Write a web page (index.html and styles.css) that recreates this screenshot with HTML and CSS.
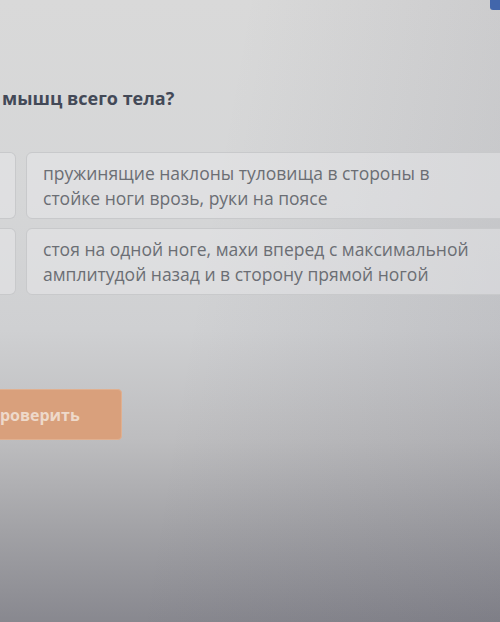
FILE: index.html
```html
<!DOCTYPE html>
<html lang="ru">
<head>
<meta charset="utf-8">
<link rel="stylesheet" href="styles.css">
</head>
<body>
<div class="page">
  <div class="topbar"><div class="corner"></div></div>
  <h1 class="question">мышц всего тела?</h1>
  <div class="options">
    <div class="opt opt-left"></div>
    <div class="opt"><p>пружинящие наклоны туловища в стороны в стойке ноги врозь, руки на поясе</p></div>
    <div class="opt opt-left"></div>
    <div class="opt"><p>стоя на одной ноге, махи вперед с максимальной амплитудой назад и в сторону прямой ногой</p></div>
  </div>
  <div class="actions"><button class="check">Проверить</button></div>
</div>
</body>
</html>
```

FILE: styles.css
```css
html, body {
  margin: 0;
  padding: 0;
  width: 500px;
  height: 622px;
  overflow: hidden;
}
body {
  background:
    linear-gradient(100deg, rgba(255,255,255,0) 40%, rgba(40,40,60,0.10) 100%),
    linear-gradient(180deg, #d9d9d9 0px, #d5d6d7 200px, #cfd0d2 330px, #bdbdbf 440px, #a2a2a6 530px, #88888f 622px);
  font-family: "Open Sans", "Noto Sans", sans-serif;
}
.page {
  width: 508px;
}
.topbar {
  height: 10px;
  display: flex;
  justify-content: flex-start;
  padding-left: 490px;
}
.corner {
  width: 14px;
  height: 10px;
  background: #4266ab;
  border-bottom-left-radius: 3px;
}
.question {
  margin: 76px 0 0 2px;
  font-size: 18px;
  font-weight: 700;
  line-height: 24px;
  color: #434957;
}
.options {
  margin-top: 42px;
  display: grid;
  grid-template-columns: 16px 1fr;
  column-gap: 10px;
  row-gap: 9px;
}
.opt {
  background: rgba(236,236,237,0.45);
  border: 1px solid #c8c9cb;
  border-radius: 6px;
  padding: 8px 16px;
  min-height: 47px;
}
.opt-left {
  border-left: none;
  border-radius: 0 6px 6px 0;
  padding: 0;
}
.opt p {
  margin: 0;
  font-size: 17.5px;
  line-height: 24.5px;
  color: #6b6e74;
}
.actions {
  margin-top: 94px;
}
.check {
  margin-left: -34px;
  width: 156px;
  height: 51px;
  background: #d9a07c;
  border: 1px solid #e0b090;
  border-radius: 4px;
  color: #eed9ca;
  font-family: "Open Sans", "Noto Sans", sans-serif;
  font-size: 16px;
  font-weight: 700;
  text-align: left;
  padding-left: 21px;
}
```
